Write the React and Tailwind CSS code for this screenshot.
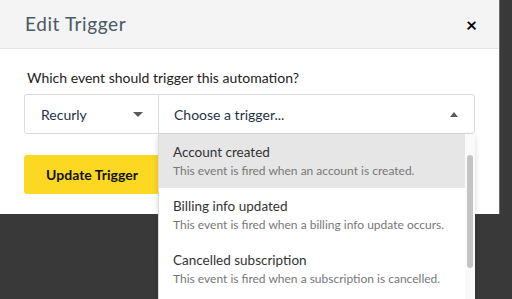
const TRIGGERS = [
  { title: 'Account created', desc: 'This event is fired when an account is created.' },
  { title: 'Billing info updated', desc: 'This event is fired when a billing info update occurs.' },
  { title: 'Cancelled subscription', desc: 'This event is fired when a subscription is cancelled.' },
]

function Caret({ up, w = 10 }) {
  return (
    <svg width={w} height="5" viewBox="0 0 10 5" preserveAspectRatio="none" className={up ? 'rotate-180' : ''}>
      <path d="M0 0h10L5 5z" fill="#5a5a5a" />
    </svg>
  )
}

export default function App() {
  return (
    <div className="relative h-[299px] w-[512px] overflow-hidden bg-[#393939] font-['Lato',sans-serif]">
      <div className="w-[500px] border-r border-[#6a6a6a] bg-white">
        <div className="flex h-[49px] items-center justify-between border-b border-[#e4e4e4] bg-[#f4f4f4] pl-[25px] pr-[22px]">
          <h2 className="text-[19px] tracking-[0.6px] text-[#4a5964]">Edit Trigger</h2>
          <span className="text-[19px] font-bold leading-none text-black">×</span>
        </div>

        <div className="px-6 pb-[20px] pt-[19px]">
          <p className="mb-[6px] pl-[3px] text-[14px] leading-5 text-[#222]">Which event should trigger this automation?</p>

          <div className="flex h-[40px] w-[451px] rounded-[3px] border border-[#dcdcdc]">
            <div className="flex w-[134px] items-center justify-between border-r border-[#dcdcdc] pl-[16px] pr-[15px]">
              <span className="text-[14px] text-[#1e3346]">Recurly</span>
              <Caret />
            </div>
            <div className="flex flex-1 items-center justify-between pl-[15px] pr-[16px]">
              <span className="text-[14px] text-[#1e3346]">Choose a trigger...</span>
              <Caret up w={8} />
            </div>
          </div>

          <button
            type="button"
            className="mt-[21px] h-[39px] w-[140px] rounded-[3px] bg-[#fdd823] pr-[4px] text-[14px] font-bold text-[#111]"
          >
            Update Trigger
          </button>
        </div>
      </div>

      <div className="absolute left-[158px] top-[134px] flex h-[200px] w-[317px] border-l border-[#dcdcdc] bg-white shadow-[0_2px_6px_rgba(0,0,0,0.15)]">
        <div className="flex-1">
          {TRIGGERS.map((item, i) => (
            <div key={item.title} className={`h-[54px] pl-[14px] pt-[9px] ${i === 0 ? 'bg-[#e6e6e6]' : ''}`}>
              <div className="text-[13.5px] leading-[18px] text-[#333]">{item.title}</div>
              <div className="mt-[2px] text-[12px] leading-4 text-[#777]">{item.desc}</div>
            </div>
          ))}
        </div>
        <div className="w-[10px] bg-[#fafafa] pt-[21px]">
          <div className="mx-auto h-[113px] w-[6px] rounded-full bg-[#c4c4c4]" />
        </div>
      </div>
    </div>
  )
}
